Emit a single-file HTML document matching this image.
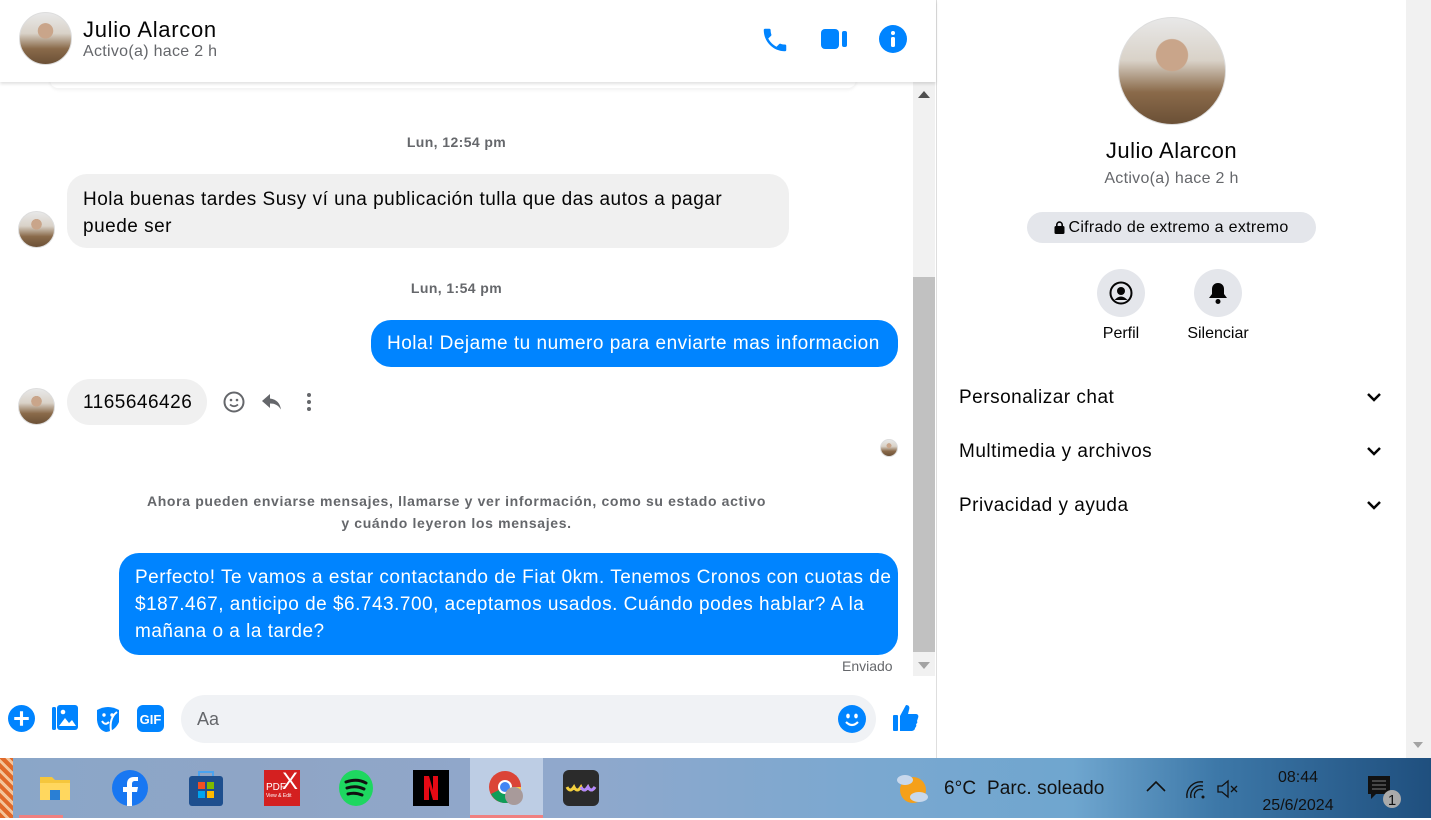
<!DOCTYPE html>
<html><head><meta charset="utf-8"><style>
*{box-sizing:border-box;margin:0;padding:0}
body{width:1431px;height:818px;overflow:hidden;background:#fff;font-family:"Liberation Sans",sans-serif;position:relative;color:#050505}
.a{position:absolute}
.av{position:absolute;border-radius:50%;background:radial-gradient(circle at 50% 35%,#c9a58a 0 18%,transparent 19%),linear-gradient(180deg,#e8e8e8 0%,#d9d2c8 40%,#8a6a4a 70%,#6b5036 100%);border:1px solid #ddd}
.bub{position:absolute;border-radius:20px;font-size:19px;letter-spacing:.5px;line-height:27px;padding:10px 16px;white-space:nowrap}
.g{background:#f0f0f0;color:#050505}
.b{background:#0084ff;color:#fff}
.ts{position:absolute;width:913px;text-align:center;font-size:14px;font-weight:bold;color:#65676b;letter-spacing:.4px}
.row{position:absolute;left:959px;font-size:19px;letter-spacing:.5px;color:#050505}
.chev{position:absolute;left:1366px}
.ti{position:absolute;top:770px;width:36px;height:36px}
</style></head><body>
<!-- header -->
<div class="a" style="left:0;top:0;width:936px;height:82px;background:#fff;box-shadow:0 2px 3px rgba(0,0,0,.12);z-index:2"></div>
<div class="av" style="left:19px;top:12px;width:53px;height:53px;z-index:3"></div>
<div class="a" style="left:83px;top:17px;font-size:22px;letter-spacing:.7px;z-index:3">Julio Alarcon</div>
<div class="a" style="left:83px;top:43px;font-size:16px;letter-spacing:.3px;color:#65676b;z-index:3">Activo(a) hace 2 h</div>
<svg class="a" style="left:760px;top:25px;z-index:3" width="30" height="30" viewBox="0 0 24 24"><path fill="#0084ff" d="M6.6 10.8c1.4 2.8 3.8 5.1 6.6 6.6l2.2-2.2c.3-.3.7-.4 1-.2 1.1.4 2.3.6 3.6.6.6 0 1 .4 1 1V20c0 .6-.4 1-1 1C10.6 21 3 13.4 3 4c0-.6.4-1 1-1h3.5c.6 0 1 .4 1 1 0 1.3.2 2.5.6 3.6.1.3 0 .7-.2 1z"/></svg>
<svg class="a" style="left:820px;top:26px;z-index:3" width="28" height="26" viewBox="0 0 28 26"><rect x="1" y="3" width="18" height="20" rx="4" fill="#0084ff"/><rect x="22" y="5" width="5" height="16" rx="2" fill="#0084ff"/></svg>
<svg class="a" style="left:879px;top:25px;z-index:3" width="28" height="28" viewBox="0 0 28 28"><circle cx="14" cy="14" r="14" fill="#0084ff"/><circle cx="14" cy="8" r="2" fill="#fff"/><rect x="12" y="12" width="4" height="10" rx="1.5" fill="#fff"/></svg>
<div class="a" style="left:50px;top:78px;width:806px;height:10px;border-radius:0 0 8px 8px;box-shadow:0 2px 3px rgba(0,0,0,.06)"></div>
<!-- scrollbar -->
<div class="a" style="left:913px;top:82px;width:22px;height:594px;background:#f1f1f1"></div>
<div class="a" style="left:913px;top:277px;width:22px;height:375px;background:#c1c1c1"></div>
<div class="a" style="left:918px;top:91px;width:0;height:0;border-left:6px solid transparent;border-right:6px solid transparent;border-bottom:7px solid #505050"></div>
<div class="a" style="left:918px;top:662px;width:0;height:0;border-left:6px solid transparent;border-right:6px solid transparent;border-top:7px solid #a3a3a3"></div>
<!-- messages -->
<div class="ts" style="top:134px">Lun, 12:54 pm</div>
<div class="av" style="left:18px;top:211px;width:37px;height:37px"></div>
<div class="bub g" style="left:67px;top:174px;width:722px;height:74px;padding-top:12px">Hola buenas tardes Susy ví una publicación tulla que das autos a pagar<br>puede ser</div>
<div class="ts" style="top:280px">Lun, 1:54 pm</div>
<div class="bub b" style="left:371px;top:320px;width:527px;height:47px">Hola! Dejame tu numero para enviarte mas informacion</div>
<div class="av" style="left:18px;top:388px;width:37px;height:37px"></div>
<div class="bub g" style="left:67px;top:379px;width:140px;height:46px;border-radius:23px">1165646426</div>
<svg class="a" style="left:222px;top:390px" width="24" height="24" viewBox="0 0 24 24"><circle cx="12" cy="12" r="9.5" fill="none" stroke="#65676b" stroke-width="2"/><circle cx="9" cy="10" r="1.3" fill="#65676b"/><circle cx="15" cy="10" r="1.3" fill="#65676b"/><path d="M8 14.5q4 3.5 8 0" fill="none" stroke="#65676b" stroke-width="1.8"/></svg>
<svg class="a" style="left:260px;top:390px" width="24" height="24" viewBox="0 0 24 24"><path fill="#65676b" d="M10 4 2 11l8 7v-4.5c5 0 8 1.5 11 6-1-6-4-10-11-11z"/></svg>
<svg class="a" style="left:302px;top:391px" width="14" height="22" viewBox="0 0 14 22"><circle cx="7" cy="4" r="2" fill="#65676b"/><circle cx="7" cy="11" r="2" fill="#65676b"/><circle cx="7" cy="18" r="2" fill="#65676b"/></svg>
<div class="av" style="left:880px;top:439px;width:18px;height:18px"></div>
<div class="ts" style="top:490px;line-height:22px;color:#65676b;letter-spacing:.65px">Ahora pueden enviarse mensajes, llamarse y ver información, como su estado activo<br>y cuándo leyeron los mensajes.</div>
<div class="bub b" style="left:119px;top:553px;width:779px;height:102px;padding-top:11px">Perfecto! Te vamos a estar contactando de Fiat 0km. Tenemos Cronos con cuotas de<br>$187.467, anticipo de $6.743.700, aceptamos usados. Cuándo podes hablar? A la<br>mañana o a la tarde?</div>
<div class="a" style="left:842px;top:658px;font-size:14px;color:#65676b">Enviado</div>
<!-- composer -->
<svg class="a" style="left:8px;top:705px" width="27" height="27" viewBox="0 0 26 26"><circle cx="13" cy="13" r="13" fill="#0084ff"/><path d="M13 6v14M6 13h14" stroke="#fff" stroke-width="3"/></svg>
<svg class="a" style="left:51px;top:704px" width="28" height="28" viewBox="0 0 28 28"><rect x="1" y="3" width="4" height="23" rx="1.5" fill="#0084ff"/><rect x="6" y="1" width="21" height="25" rx="3" fill="#0084ff"/><circle cx="12" cy="8" r="2.3" fill="#fff"/><path d="M8 22l6-8 4 5 3-3 4 6z" fill="#fff"/></svg>
<svg class="a" style="left:95px;top:705px" width="26" height="28" viewBox="0 0 26 28"><path d="M2 5q11-6 22 0v12q-4 9-13 10Q3 25 2 15z" fill="#0084ff"/><circle cx="9" cy="10" r="1.7" fill="#fff"/><circle cx="17" cy="10" r="1.7" fill="#fff"/><path d="M7 16q3 5 7 1M22 7q-8 6-6 19" fill="none" stroke="#fff" stroke-width="2"/></svg>
<svg class="a" style="left:137px;top:705px" width="27" height="27" viewBox="0 0 27 27"><rect width="27" height="27" rx="6" fill="#0084ff"/><text x="13.5" y="19" text-anchor="middle" font-family="Liberation Sans" font-weight="bold" font-size="13" fill="#fff">GIF</text></svg>
<div class="a" style="left:181px;top:695px;width:695px;height:48px;border-radius:24px;background:#f0f2f5"></div>
<div class="a" style="left:197px;top:709px;font-size:18px;color:#65676b">Aa</div>
<svg class="a" style="left:838px;top:705px" width="28" height="28" viewBox="0 0 28 28"><circle cx="14" cy="14" r="14" fill="#0084ff"/><ellipse cx="10" cy="11" rx="1.8" ry="2.4" fill="#fff"/><ellipse cx="18" cy="11" rx="1.8" ry="2.4" fill="#fff"/><path d="M8 17q6 6 12 0" fill="none" stroke="#fff" stroke-width="2.2"/></svg>
<svg class="a" style="left:891px;top:703px" width="30" height="30" viewBox="0 0 30 30"><rect x="2" y="12" width="5" height="16" rx="1" fill="#0084ff"/><path d="M9 13l6-11c3 0 4 2 3 5l-1 4h8c2 0 3 2 2 4l-1 3q1 2-1 3 1 2-1 4c0 2-2 3-4 3H9z" fill="#0084ff"/></svg>
<!-- right panel -->
<div class="a" style="left:936px;top:0;width:1px;height:758px;background:#dedede"></div>
<div class="av" style="left:1118px;top:17px;width:108px;height:108px"></div>
<div class="a" style="left:937px;top:138px;width:469px;text-align:center;font-size:22px;letter-spacing:.5px">Julio Alarcon</div>
<div class="a" style="left:937px;top:170px;width:469px;text-align:center;font-size:16px;letter-spacing:.3px;color:#65676b">Activo(a) hace 2 h</div>
<div class="a" style="left:1027px;top:212px;width:289px;height:31px;border-radius:16px;background:#e4e6eb;font-size:16px;letter-spacing:.3px;line-height:32px;text-align:center"><svg width="11" height="13" viewBox="0 0 11 13" style="vertical-align:-2px;margin-right:3px"><rect x="0.5" y="5" width="10" height="8" rx="1.5" fill="#050505"/><path d="M2.8 6V3.8a2.7 2.7 0 0 1 5.4 0V6" fill="none" stroke="#050505" stroke-width="1.6"/></svg>Cifrado de extremo a extremo</div>
<div class="a" style="left:1097px;top:269px;width:48px;height:48px;border-radius:50%;background:#e4e6eb"></div>
<svg class="a" style="left:1109px;top:281px" width="24" height="24" viewBox="0 0 24 24"><circle cx="12" cy="12" r="10.5" fill="none" stroke="#050505" stroke-width="2"/><circle cx="12" cy="10" r="4" fill="#050505"/><path d="M5.5 19q6.5-7 13 0" fill="#050505"/></svg>
<div class="a" style="left:1194px;top:269px;width:48px;height:48px;border-radius:50%;background:#e4e6eb"></div>
<svg class="a" style="left:1207px;top:281px" width="22" height="24" viewBox="0 0 22 24"><path d="M11 2c-4 0-6 3-6 6v5l-3 4h18l-3-4V8c0-3-2-6-6-6z" fill="#050505"/><circle cx="11" cy="20.5" r="2.5" fill="#050505"/></svg>
<div class="a" style="left:1081px;top:325px;width:80px;text-align:center;font-size:16px">Perfil</div>
<div class="a" style="left:1168px;top:325px;width:100px;text-align:center;font-size:16px">Silenciar</div>
<div class="row" style="top:387px">Personalizar chat</div>
<div class="row" style="top:441px">Multimedia y archivos</div>
<div class="row" style="top:495px">Privacidad y ayuda</div>
<svg class="chev" style="top:390px" width="16" height="14" viewBox="0 0 16 14"><path d="M2 4l6 6 6-6" fill="none" stroke="#050505" stroke-width="2.5"/></svg>
<svg class="chev" style="top:444px" width="16" height="14" viewBox="0 0 16 14"><path d="M2 4l6 6 6-6" fill="none" stroke="#050505" stroke-width="2.5"/></svg>
<svg class="chev" style="top:498px" width="16" height="14" viewBox="0 0 16 14"><path d="M2 4l6 6 6-6" fill="none" stroke="#050505" stroke-width="2.5"/></svg>
<!-- browser scrollbar -->
<div class="a" style="left:1406px;top:0;width:25px;height:758px;background:#f1f1f1"></div>
<div class="a" style="left:1413px;top:742px;border-left:5px solid transparent;border-right:5px solid transparent;border-top:6px solid #a3a3a3"></div>
<!-- taskbar -->
<div class="a" style="left:0;top:758px;width:1431px;height:60px;background:linear-gradient(90deg,#8aa6c8 0%,#8fa5c6 20%,#90a8cc 40%,#7ba8d0 60%,#6fa6cf 75%,#3d78a8 85%,#1f4f7e 100%)"></div>
<div class="a" style="left:0;top:758px;width:13px;height:60px;background:repeating-linear-gradient(45deg,#e06a2a 0 4px,#f4c49a 4px 7px)"></div>
<div class="a" style="left:470px;top:758px;width:73px;height:60px;background:rgba(220,230,245,.6)"></div>
<div class="a" style="left:19px;top:815px;width:44px;height:3px;background:#f08080"></div>
<div class="a" style="left:470px;top:815px;width:73px;height:3px;background:#f08080"></div>
<svg class="ti" style="left:37px" viewBox="0 0 36 36"><path d="M3 7h12l3 3h15v20H3z" fill="#f5c63c"/><rect x="3" y="13" width="30" height="17" fill="#ffd75e"/><rect x="13" y="20" width="10" height="10" fill="#2a7fd4"/></svg>
<svg class="ti" style="left:112px" viewBox="0 0 36 36"><circle cx="18" cy="18" r="18" fill="#1877f2"/><path d="M20 36V22h5l1-5h-6v-3c0-2 1-3 3-3h3V7h-4c-5 0-7 3-7 7v3h-4v5h4v14z" fill="#fff"/></svg>
<svg class="ti" style="left:188px" viewBox="0 0 36 36"><path d="M11 6V2h14v4" fill="none" stroke="#4aa3f0" stroke-width="2"/><rect x="1" y="6" width="34" height="30" rx="3" fill="#1e4f8e"/><rect x="10" y="12" width="7" height="7" fill="#f25022"/><rect x="19" y="12" width="7" height="7" fill="#7fba00"/><rect x="10" y="21" width="7" height="7" fill="#00a4ef"/><rect x="19" y="21" width="7" height="7" fill="#ffb900"/></svg>
<div class="ti" style="left:264px;background:#d42020;color:#fff;font-size:10px;padding:12px 0 0 2px">PDF<span style="font-size:24px;position:absolute;left:18px;top:-2px">X</span><div style="font-size:5px">View &amp; Edit</div></div>
<svg class="ti" style="left:338px" viewBox="0 0 36 36"><ellipse cx="18" cy="18" rx="17" ry="18" fill="#1ed760"/><path d="M8 12q11-4 20 1M9 18q9-3 17 1M10 24q7-2 14 1" stroke="#111" stroke-width="3" fill="none" stroke-linecap="round"/></svg>
<svg class="ti" style="left:413px" viewBox="0 0 36 36"><rect width="36" height="36" fill="#000"/><path d="M11 6h5l4 14V6h5v24h-5l-4-14v14h-5z" fill="#e50914"/></svg>
<svg class="ti" style="left:488px" viewBox="0 0 36 36"><circle cx="17" cy="17" r="16" fill="#db4437"/><path d="M17 17L3 24A16 16 0 0 0 25 31z" fill="#0f9d58"/><path d="M17 17h16a16 16 0 0 1-8 14z" fill="#ffcd40"/><circle cx="17" cy="17" r="7" fill="#fff"/><circle cx="17" cy="17" r="5" fill="#4285f4"/><circle cx="26" cy="26" r="9" fill="#a89a9a"/></svg>
<svg class="ti" style="left:563px" viewBox="0 0 36 36"><rect width="36" height="36" rx="6" fill="#2b2b2b"/><path d="M4 17q3 6 7 0 3 6 7 0 3 6 7 0 3 6 7 0" fill="none" stroke="#f4d03f" stroke-width="3"/><path d="M18 17q3 6 7 0 3 6 7 0" fill="none" stroke="#b388ff" stroke-width="3"/></svg>
<svg class="a" style="left:896px;top:770px" width="34" height="36" viewBox="0 0 34 36"><circle cx="17" cy="20" r="13" fill="#f5a01a"/><ellipse cx="9" cy="10" rx="8" ry="5" fill="#c8d8ec"/><ellipse cx="23" cy="27" rx="9" ry="5" fill="#c8d8ec"/></svg>
<div class="a" style="left:944px;top:778px;font-size:19px;letter-spacing:.1px;color:#111">6°C&nbsp; Parc. soleado</div>
<svg class="a" style="left:1145px;top:778px" width="22" height="16" viewBox="0 0 22 16"><path d="M2 13l9-9 9 9" fill="none" stroke="#111" stroke-width="1.6"/></svg>
<svg class="a" style="left:1183px;top:776px" width="24" height="24" viewBox="0 0 24 24"><path d="M4 22a14 14 0 0 1 16-16M8 22a10 10 0 0 1 12-12M12 22a6 6 0 0 1 8-8" fill="none" stroke="#111" stroke-width="1.4"/><circle cx="20" cy="21" r="1.5" fill="#111"/></svg>
<svg class="a" style="left:1216px;top:778px" width="24" height="22" viewBox="0 0 24 22"><path d="M2 8h4l6-5v16l-6-5H2z" fill="none" stroke="#111" stroke-width="1.3"/><path d="M15 8l6 6M21 8l-6 6" stroke="#111" stroke-width="1.3"/></svg>
<div class="a" style="left:1250px;top:764px;width:96px;text-align:center;font-size:16px;color:#111;line-height:28px">08:44<br>25/6/2024</div>
<svg class="a" style="left:1366px;top:774px" width="40" height="40" viewBox="0 0 40 40"><path d="M2 2h22v18H10l-5 5v-5H2z" fill="#111"/><path d="M6 7h14M6 11h14M6 15h14" stroke="#666" stroke-width="1.2"/><circle cx="26" cy="25" r="9" fill="#aaa"/><text x="26" y="31" text-anchor="middle" font-family="Liberation Sans" font-size="15" fill="#111">1</text></svg>
</body></html>
